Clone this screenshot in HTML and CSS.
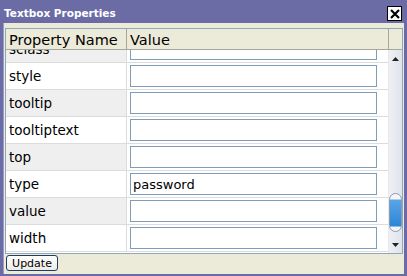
FILE: index.html
```html
<!DOCTYPE html>
<html lang="en">
<head>
    <meta charset="UTF-8">
    <title>Textbox Properties</title>
    <link rel="stylesheet" href="styles.css">
</head>
<body>
    <div class="window">
        <div class="titlebar">
            <span class="title">Textbox Properties</span>
            <button class="close" aria-label="Close">
                <svg width="10" height="10" viewBox="0 0 10 10"><path d="M1 1 L9 9 M9 1 L1 9" stroke="#000" stroke-width="2.2"/></svg>
            </button>
        </div>
        <div class="panel">
            <div class="grid">
                <div class="grid-main">
                    <div class="grid-head">
                        <div class="col-name">Property Name</div>
                        <div class="col-value">Value</div>
                    </div>
                    <div class="grid-body">
                        <div class="rows">
                            <div class="row alt"><div class="col-name">sclass</div><div class="col-value"><input type="text"></div></div>
                            <div class="row"><div class="col-name">style</div><div class="col-value"><input type="text"></div></div>
                            <div class="row alt"><div class="col-name">tooltip</div><div class="col-value"><input type="text"></div></div>
                            <div class="row"><div class="col-name">tooltiptext</div><div class="col-value"><input type="text"></div></div>
                            <div class="row alt"><div class="col-name">top</div><div class="col-value"><input type="text"></div></div>
                            <div class="row"><div class="col-name">type</div><div class="col-value"><input type="text" value="password"></div></div>
                            <div class="row alt"><div class="col-name">value</div><div class="col-value"><input type="text"></div></div>
                            <div class="row"><div class="col-name">width</div><div class="col-value"><input type="text"></div></div>
                        </div>
                    </div>
                </div>
                <div class="grid-side">
                    <div class="corner"></div>
                    <div class="scrollbar">
                        <div class="arrow"><svg width="7" height="4" viewBox="0 0 7 4"><path d="M0 4 L3.5 0 L7 4 Z" fill="#222"/></svg></div>
                        <div class="track"><div class="thumb"></div></div>
                        <div class="arrow"><svg width="7" height="4" viewBox="0 0 7 4"><path d="M0 0 L3.5 4 L7 0 Z" fill="#222"/></svg></div>
                    </div>
                </div>
            </div>
            <div class="footer">
                <button class="btn">Update</button>
            </div>
        </div>
    </div>
</body>
</html>
```

FILE: styles.css
```css
/* Base */
body, html {
    margin: 0;
    padding: 0;
    font-family: 'DejaVu Sans', Verdana, sans-serif;
}

/* Window frame */
.window {
    width: 407px;
    height: 276px;
    box-sizing: border-box;
    background: #6b6ba6;
    padding: 0 3px 2px 3px;
    display: flex;
    flex-direction: column;
}

.titlebar {
    height: 23px;
    display: flex;
    align-items: center;
    justify-content: space-between;
    padding: 0 2px 0 1px;
}

.title {
    color: #fff;
    font-weight: bold;
    font-size: 10.5px;
    margin-top: 2px;
}

.close {
    width: 15px;
    height: 15px;
    margin-top: 4px;
    padding: 0;
    border: 1px solid #000;
    background: #fff;
    display: flex;
    align-items: center;
    justify-content: center;
}

/* Panel */
.panel {
    flex: 1;
    background: #ecead9;
    border-left: 1px solid #9b9bc4;
    padding: 5px 1px 0 1px;
    display: flex;
    flex-direction: column;
}

.grid {
    height: 224px;
    border: 1px solid #8fa6bd;
    background: #fff;
    display: flex;
}

.grid-main {
    flex: 1;
    display: flex;
    flex-direction: column;
}

.grid-head {
    height: 20px;
    display: flex;
    background: #ecead9;
    border-bottom: 1px solid #a7a69c;
    font-size: 14.5px;
}

.grid-head .col-name {
    border-right: 1px solid #a7a69c;
}

.grid-head > div {
    display: flex;
    align-items: center;
    padding-top: 2px;
}

.col-name {
    width: 117px;
    padding-left: 3px;
    border-right: 1px solid #dcdcdc;
}

.col-value {
    flex: 1;
    padding-left: 3px;
}

.grid-body {
    flex: 1;
    overflow: hidden;
}

.rows {
    margin-top: -14px;
}

.row {
    height: 27px;
    box-sizing: border-box;
    display: flex;
    align-items: center;
    border-bottom: 1px solid #dcdcdc;
    font-size: 13.5px;
    background: #fff;
}

.row > div {
    height: 100%;
    display: flex;
    align-items: center;
}

.row.alt .col-name {
    background: #efefef;
}

.row input {
    width: 247px;
    height: 22px;
    box-sizing: border-box;
    border: 1px solid #7f9db9;
    font-family: inherit;
    font-size: 13px;
    padding: 1px 2px 0;
    margin: 0;
    outline: none;
}

/* Scrollbar */
.grid-side {
    width: 14px;
    display: flex;
    flex-direction: column;
    background: #fff;
}

.corner {
    height: 20px;
    background: #ecead9;
    border-bottom: 1px solid #a7a69c;
    border-left: 1px solid #a7a69c;
}

.scrollbar {
    flex: 1;
    display: flex;
    flex-direction: column;
    background: linear-gradient(to right, #eef0f5, #dfe3ea);
    border-left: 1px solid #e8e8e8;
}

.arrow {
    height: 17px;
    display: flex;
    align-items: center;
    justify-content: center;
}

.track {
    flex: 1;
    display: flex;
    flex-direction: column;
    justify-content: flex-end;
}

.thumb {
    height: 39px;
    margin: 0 0 4px 0;
    box-sizing: border-box;
    border: 1px solid #8a9cb5;
    border-radius: 7px;
    background: linear-gradient(to bottom, #f5f6f8 0, #f5f6f8 5px, #5aa5e6 6px, #2c86d6 32px, #f5f6f8 33px);
}

/* Footer */
.footer {
    flex: 1;
    padding: 1px 0 0 1px;
}

.btn {
    width: 52px;
    height: 16px;
    padding: 0;
    font-family: inherit;
    font-size: 11px;
    border: 1px solid #1e3d6b;
    border-radius: 3px;
    background: linear-gradient(#ffffff, #ecebe6);
    color: #000;
    display: flex;
    align-items: center;
    justify-content: center;
}
```
